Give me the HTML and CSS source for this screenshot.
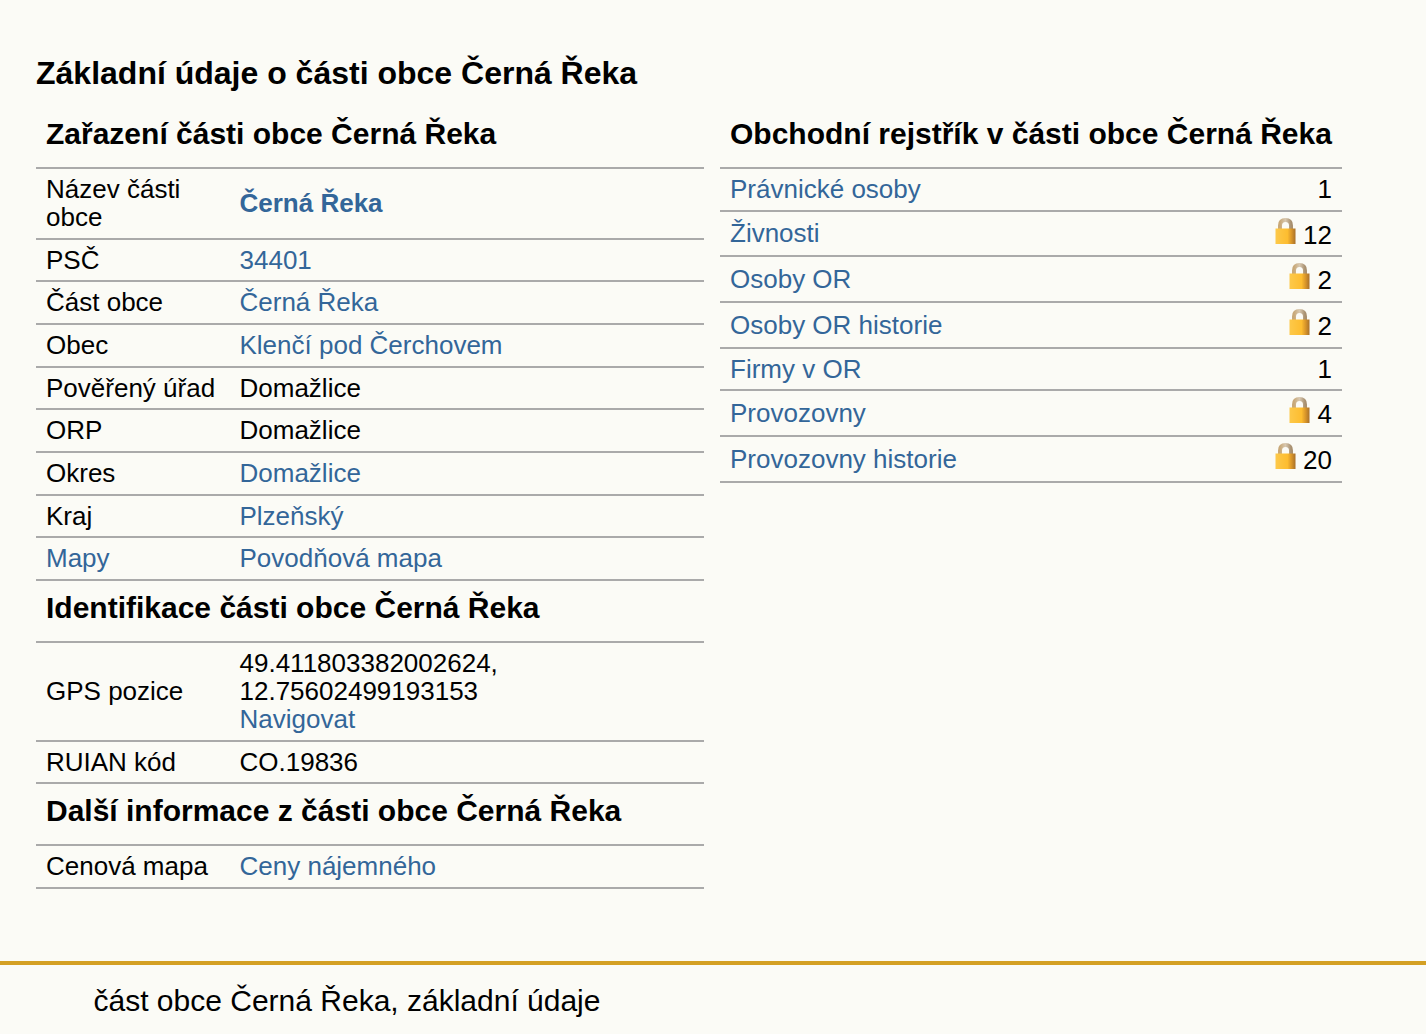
FILE: index.html
```html
<!DOCTYPE html>
<html lang="cs">
<head>
<meta charset="utf-8">
<title>Černá Řeka</title>
<link rel="stylesheet" href="styles.css">
</head>
<body>
<svg class="defs" width="0" height="0" aria-hidden="true">
  <defs>
    <linearGradient id="lockBody" x1="0" y1="0" x2="1" y2="0">
      <stop offset="0" stop-color="#fdc94a"/>
      <stop offset="0.6" stop-color="#fdbd30"/>
      <stop offset="0.8" stop-color="#d9962a"/>
      <stop offset="1" stop-color="#a8702a"/>
    </linearGradient>
    <linearGradient id="lockArc" x1="0" y1="0" x2="1" y2="0">
      <stop offset="0" stop-color="#c8a878"/>
      <stop offset="0.5" stop-color="#d8c8b0"/>
      <stop offset="1" stop-color="#a89070"/>
    </linearGradient>
    <symbol id="lock" viewBox="0 0 21 26">
      <path d="M5 12V7.500C5 3.500 7 2 10.500 2S16 3.500 16 7.500V12" fill="none" stroke="url(#lockArc)" stroke-width="4"/>
      <rect x="0.500" y="10.500" width="20" height="15.500" fill="url(#lockBody)"/>
    </symbol>
  </defs>
</svg>
<main class="content">
  <h1>Základní údaje o části obce Černá Řeka</h1>
  <div class="columns">
    <table class="info">
      <tr class="head"><th colspan="2"><h2>Zařazení části obce Černá Řeka</h2></th></tr>
      <tr><td class="label">Název části obce</td><td><a class="strong" href="#">Černá Řeka</a></td></tr>
      <tr><td class="label">PSČ</td><td><a href="#">34401</a></td></tr>
      <tr><td class="label">Část obce</td><td><a href="#">Černá Řeka</a></td></tr>
      <tr><td class="label">Obec</td><td><a href="#">Klenčí pod Čerchovem</a></td></tr>
      <tr><td class="label">Pověřený úřad</td><td>Domažlice</td></tr>
      <tr><td class="label">ORP</td><td>Domažlice</td></tr>
      <tr><td class="label">Okres</td><td><a href="#">Domažlice</a></td></tr>
      <tr><td class="label">Kraj</td><td><a href="#">Plzeňský</a></td></tr>
      <tr><td class="label"><a href="#">Mapy</a></td><td><a href="#">Povodňová mapa</a></td></tr>
      <tr class="head"><th colspan="2"><h2>Identifikace části obce Černá Řeka</h2></th></tr>
      <tr><td class="label">GPS pozice</td><td>49.411803382002624, 12.75602499193153<br><a href="#">Navigovat</a></td></tr>
      <tr><td class="label">RUIAN kód</td><td>CO.19836</td></tr>
      <tr class="head"><th colspan="2"><h2>Další informace z části obce Černá Řeka</h2></th></tr>
      <tr><td class="label">Cenová mapa</td><td><a href="#">Ceny nájemného</a></td></tr>
    </table>
    <table class="register">
      <tr class="head"><th colspan="2"><h2>Obchodní rejstřík v části obce Černá Řeka</h2></th></tr>
      <tr><td><a href="#">Právnické osoby</a></td><td class="num">1</td></tr>
      <tr><td><a href="#">Živnosti</a></td><td class="num"><svg class="lock"><use href="#lock"/></svg> 12</td></tr>
      <tr><td><a href="#">Osoby OR</a></td><td class="num"><svg class="lock"><use href="#lock"/></svg> 2</td></tr>
      <tr><td><a href="#">Osoby OR historie</a></td><td class="num"><svg class="lock"><use href="#lock"/></svg> 2</td></tr>
      <tr><td><a href="#">Firmy v OR</a></td><td class="num">1</td></tr>
      <tr><td><a href="#">Provozovny</a></td><td class="num"><svg class="lock"><use href="#lock"/></svg> 4</td></tr>
      <tr><td><a href="#">Provozovny historie</a></td><td class="num"><svg class="lock"><use href="#lock"/></svg> 20</td></tr>
    </table>
  </div>
</main>
<footer class="footer">část obce Černá Řeka, základní údaje</footer>
</body>
</html>
```
FILE: styles.css
```css
html, body {
  margin: 0;
  padding: 0;
}
body {
  background: #fbfbf6;
  color: #000;
  font-family: "Liberation Sans", Arial, sans-serif;
  font-size: 26px;
  line-height: 28px;
  height: 1034px;
  overflow: hidden;
}
.defs {
  position: absolute;
}
a {
  color: #336699;
  text-decoration: none;
}
a.strong {
  font-weight: bold;
}
.content {
  padding: 55px 36px 0;
  height: 906px;
}
h1 {
  margin: 0 0 15px;
  font-size: 32px;
  line-height: 37px;
  font-weight: bold;
}
h2 {
  margin: 0;
  font-size: 30px;
  line-height: 35px;
  font-weight: bold;
  text-align: left;
}
.columns {
  display: flex;
  gap: 16px;
  align-items: flex-start;
}
table {
  border-collapse: collapse;
  border-spacing: 0;
}
.info {
  width: 668px;
}
.register {
  width: 622px;
}
th {
  padding: 9px 10px 16px;
  text-align: left;
  white-space: nowrap;
}
.head th {
  border-bottom: 2px solid #aaa;
}
td {
  padding: 6px 10px 6.68px;
  border-bottom: 2px solid #aaa;
  vertical-align: middle;
}
.label {
  width: 173.5px;
}
.num {
  text-align: right;
  white-space: nowrap;
}
.lock {
  width: 21px;
  height: 26px;
  vertical-align: baseline;
}
.footer {
  border-top: 4px solid #d4a024;
  padding: 19px 0 0 93.5px;
  font-size: 30px;
  line-height: 34px;
}
```
